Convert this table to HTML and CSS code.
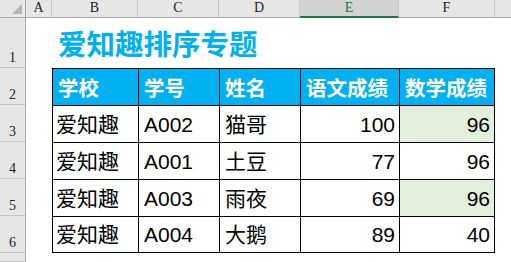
FILE: index.html
```html
<!DOCTYPE html>
<html lang="zh">
<head>
<meta charset="utf-8">
<link rel="stylesheet" href="styles.css">
</head>
<body>
<div class="sheet">
  <div class="corner"><span class="tri"></span></div>
  <div class="ch">A</div>
  <div class="ch">B</div>
  <div class="ch">C</div>
  <div class="ch">D</div>
  <div class="ch sel">E</div>
  <div class="ch">F</div>
  <div class="ch last"></div>

  <div class="rh">1</div>
  <div class="c"></div>
  <div class="c title">爱知趣排序专题</div>

  <div class="rh">2</div>
  <div class="c"></div>
  <div class="t th first">学校</div>
  <div class="t th">学号</div>
  <div class="t th">姓名</div>
  <div class="t th">语文成绩</div>
  <div class="t th lastcol">数学成绩</div>
  <div class="c"></div>

  <div class="rh">3</div>
  <div class="c"></div>
  <div class="t first">爱知趣</div>
  <div class="t">A002</div>
  <div class="t">猫哥</div>
  <div class="t num">100</div>
  <div class="t num lastcol hl">96</div>
  <div class="c"></div>

  <div class="rh">4</div>
  <div class="c"></div>
  <div class="t first">爱知趣</div>
  <div class="t">A001</div>
  <div class="t">土豆</div>
  <div class="t num">77</div>
  <div class="t num lastcol">96</div>
  <div class="c"></div>

  <div class="rh">5</div>
  <div class="c"></div>
  <div class="t first">爱知趣</div>
  <div class="t">A003</div>
  <div class="t">雨夜</div>
  <div class="t num">69</div>
  <div class="t num lastcol hl">96</div>
  <div class="c"></div>

  <div class="rh">6</div>
  <div class="c"></div>
  <div class="t first lastrow">爱知趣</div>
  <div class="t lastrow">A004</div>
  <div class="t lastrow">大鹅</div>
  <div class="t num lastrow">89</div>
  <div class="t num lastcol lastrow">40</div>
  <div class="c"></div>

  <div class="rh"></div>
  <div class="c rest"></div>
</div>
</body>
</html>
```

FILE: styles.css
```css
* { box-sizing: border-box; }
html, body { margin: 0; padding: 0; background: #ffffff; }
body { width: 511px; height: 262px; overflow: hidden; }

.sheet {
  display: grid;
  grid-template-columns: 26px 26px 86px 81px 81px 99px 96px 16px;
  grid-template-rows: 18px 50px repeat(5, 37px) 9px;
  width: 511px;
  height: 262px;
  overflow: hidden;
  font-family: "Liberation Sans", "Noto Sans CJK SC", sans-serif;
}

.corner {
  position: relative;
  background: #e6e6e6;
  border-right: 1px solid #ababab;
  border-bottom: 1px solid #ababab;
}
.tri {
  position: absolute;
  right: 3px;
  bottom: 3px;
  width: 0;
  height: 0;
  border-left: 10px solid transparent;
  border-bottom: 10px solid #b4b4b4;
}

.ch {
  background: #e6e6e6;
  border-right: 1px solid #c6c6c6;
  border-bottom: 1px solid #ababab;
  display: flex;
  align-items: flex-end;
  justify-content: center;
  padding-bottom: 1px;
  font-family: "Liberation Serif", "DejaVu Serif", serif;
  font-size: 14px;
  line-height: 16px;
  color: #222222;
}
.ch.sel {
  background: #d2d2d2;
  color: #217346;
  border-bottom: 2px solid #217346;
  padding-bottom: 0;
}
.ch.last { border-right: none; }

.rh {
  background: #e6e6e6;
  border-right: 1px solid #ababab;
  border-bottom: 1px solid #c6c6c6;
  display: flex;
  align-items: flex-end;
  justify-content: center;
  padding-bottom: 1px;
  font-family: "Liberation Serif", "DejaVu Serif", serif;
  font-size: 14px;
  line-height: 16px;
  color: #222222;
}

.c { background: #ffffff; }
.rest { grid-column: 2 / -1; }

.title {
  grid-column: 3 / -1;
  display: flex;
  align-items: center;
  padding-left: 6px;
  padding-top: 1px;
  font-family: "Noto Sans CJK SC", sans-serif;
  font-weight: 700;
  font-size: 28.5px;
  line-height: 1;
  color: #00b0f0;
  white-space: nowrap;
}

.t {
  border-top: 1px solid #000000;
  border-left: 1px solid #000000;
  display: flex;
  align-items: center;
  padding: 0 4px 0 5px;
  font-size: 21px;
  line-height: 1;
  color: #000000;
  white-space: nowrap;
  background: #ffffff;
}
.t.first { padding-left: 3px; }
.t.lastcol { border-right: 1px solid #000000; }
.t.lastrow { border-bottom: 1px solid #000000; }
.t.num { justify-content: flex-end; }
.t.hl { background: #e2efda; }

.th {
  background: #00b0f0;
  color: #ffffff;
  font-family: "Noto Sans CJK SC", sans-serif;
  font-weight: 700;
  font-size: 20.5px;
  padding-left: 5px;
}
.th.first { padding-left: 5px; }
```
